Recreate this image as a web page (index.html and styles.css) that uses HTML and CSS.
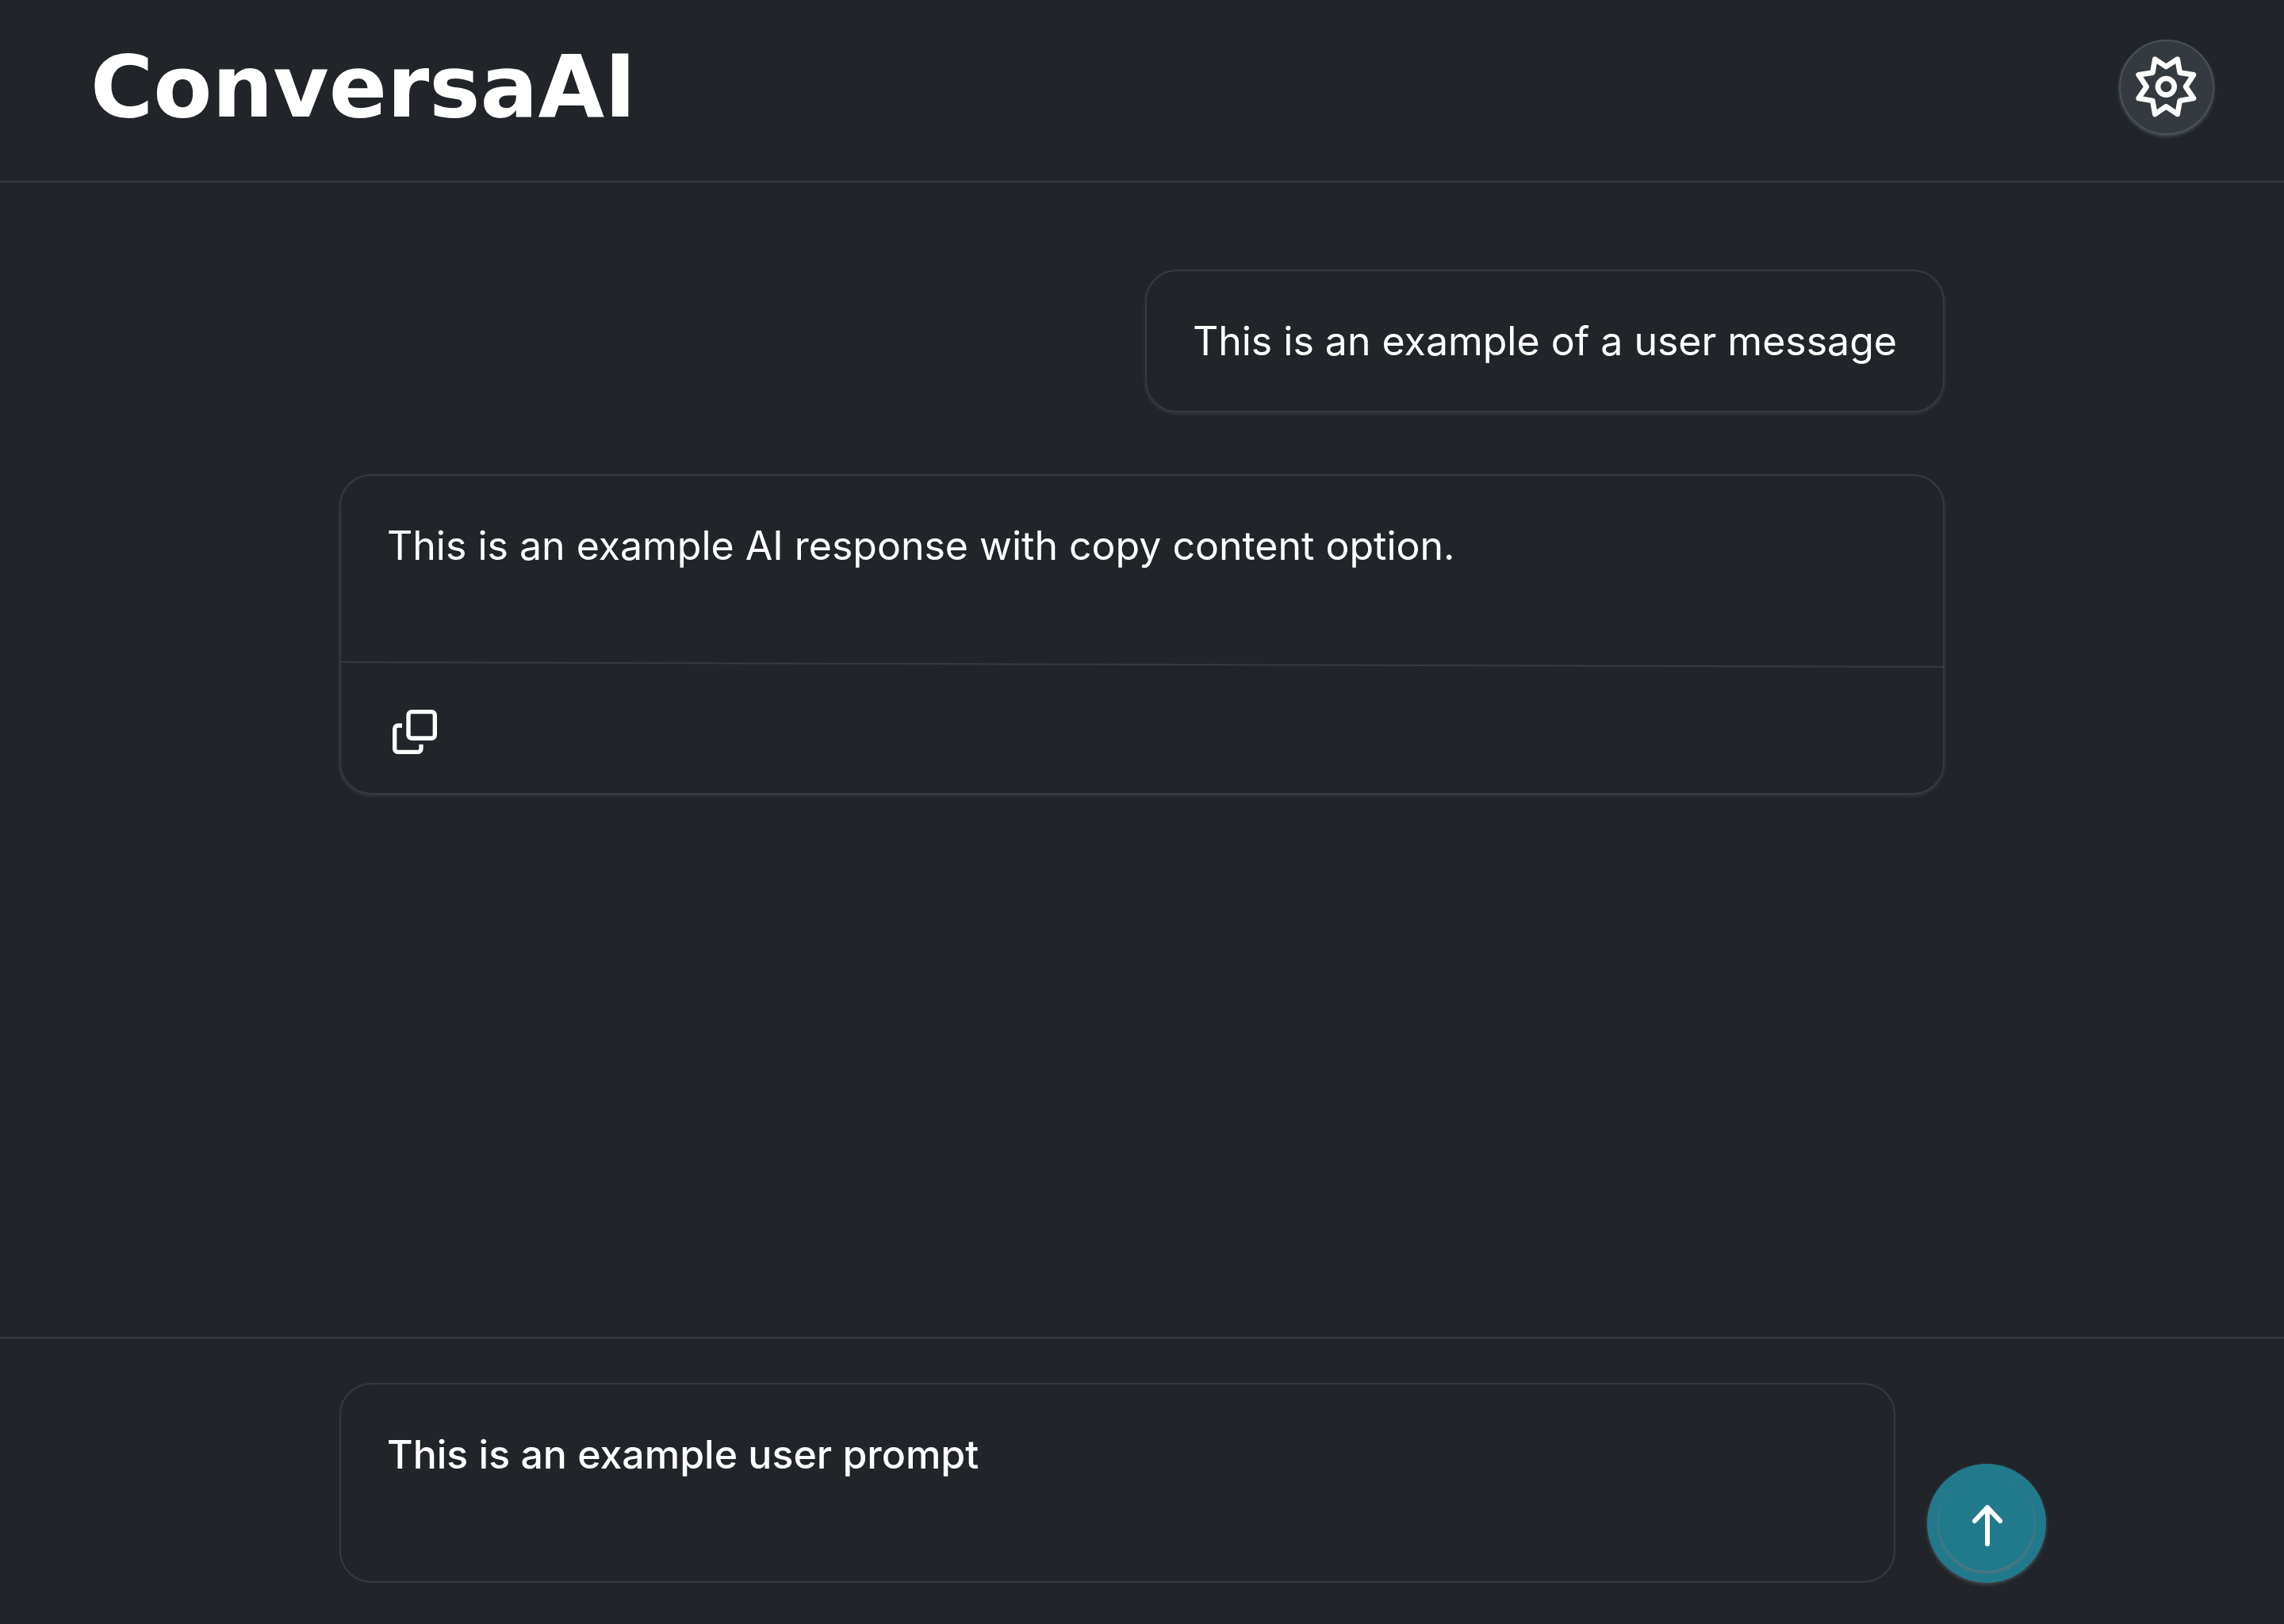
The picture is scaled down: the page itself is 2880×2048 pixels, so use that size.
FILE: index.html
```html
<!DOCTYPE html>
<html lang="en">
<head>
<meta charset="utf-8">
<meta name="viewport" content="width=device-width, initial-scale=1">
<title>ConversaAI</title>
<link rel="stylesheet" href="styles.css">
</head>
<body>
<div class="app">
  <header class="header">
    <h1 class="logo">ConversaAI</h1>
    <button class="settings" type="button" aria-label="Settings">
      <svg class="settings-icon" viewBox="155 119 240 240" aria-hidden="true">
        <path d="M231 133 L273 161 L316 133 L325 184 L377 192 L347 237 L377 281 L325 290 L316 341 L273 312 L231 341 L222 290 L169 281 L199 237 L169 192 L222 184 Z"/>
        <circle cx="273" cy="237" r="31"/>
      </svg>
    </button>
  </header>

  <main class="chat">
    <article class="message message-user">
      <p class="message-text">This is an example of a user message</p>
    </article>
    <article class="message message-ai">
      <p class="message-text">This is an example AI response with copy content option.</p>
      <svg class="divider" viewBox="0 0 2020 10" preserveAspectRatio="none" aria-hidden="true">
        <line x1="0" y1="3" x2="2020" y2="9"/>
      </svg>
      <div class="message-actions">
        <button class="copy" type="button" aria-label="Copy response">
          <svg class="copy-icon" viewBox="255 945 168 168" aria-hidden="true">
            <rect x="315" y="953" width="100" height="100" rx="12"/>
            <path d="M291 1005 H275 A12 12 0 0 0 263 1017 V1093 A12 12 0 0 0 275 1105 H351 A12 12 0 0 0 363 1093 V1076"/>
          </svg>
        </button>
      </div>
    </article>
  </main>

  <form class="composer">
    <textarea class="prompt" aria-label="Prompt" spellcheck="false">This is an example user prompt</textarea>
    <button class="send" type="button" aria-label="Send">
      <span class="send-inner">
        <svg class="send-icon" viewBox="0 0 60 60" aria-hidden="true">
          <path d="M31 56 V10 M15 27 L31 10 L47 27"/>
        </svg>
      </span>
    </button>
  </form>
</div>
</body>
</html>
```
FILE: styles.css
```css
* {
  box-sizing: border-box;
}

body {
  margin: 0;
  background: #212529;
  color: #fff;
  font-family: Inter, "Liberation Sans", sans-serif;
  font-size: 50px;
  line-height: 60px;
}

button {
  padding: 0;
  border: 0;
  background: none;
  color: inherit;
  cursor: pointer;
}

svg {
  display: block;
  fill: none;
  stroke: currentColor;
}

.app {
  display: flex;
  flex-direction: column;
  min-height: 100vh;
}

.header {
  display: flex;
  align-items: center;
  justify-content: space-between;
  padding: 50px 88px 58px 114px;
  border-bottom: 2px solid #343a40;
}

.logo {
  margin: 0;
  font-family: "DejaVu Sans", sans-serif;
  font-size: 108px;
  font-weight: 700;
  line-height: 120px;
}

.settings {
  display: grid;
  place-items: center;
  width: 120px;
  height: 120px;
  border: 2px solid #495057;
  border-radius: 50%;
  background: #343a40;
  box-shadow: 0 2px 4px #495057;
}

.settings-icon {
  width: 80px;
  height: 80px;
  stroke-width: 20;
  stroke-linejoin: round;
}

.chat {
  display: flex;
  flex: 1;
  flex-direction: column;
  gap: 78px;
  padding: 110px 428px;
}

.message {
  border: 2px solid #343a40;
  border-radius: 40px;
  background: #212529;
  box-shadow: 0 2px 4px #343a40;
}

.message-user {
  align-self: flex-end;
}

.message-text {
  margin: 0;
  padding: 58px;
}

.message-ai .message-text {
  padding-bottom: 114px;
}

.divider {
  width: 100%;
  height: 10px;
  stroke: #343a40;
  stroke-width: 2;
}

.message-actions {
  display: flex;
  padding: 53px 65px 49px;
}

.copy-icon {
  width: 56px;
  height: 56px;
  stroke-width: 16;
}

.composer {
  display: flex;
  align-items: flex-end;
  gap: 40px;
  padding: 56px 300px 52px 428px;
  border-top: 2px solid #343a40;
}

.prompt {
  display: block;
  flex: 1;
  height: 252px;
  padding: 58px;
  border: 2px solid #343a40;
  border-radius: 40px;
  outline: 0;
  background: #212529;
  color: inherit;
  font: inherit;
  font-weight: 500;
  resize: none;
}

.send {
  display: grid;
  place-items: center;
  width: 150px;
  height: 150px;
  border-radius: 50%;
  background: #217a8c;
  box-shadow: 0 2px 4px #495057;
}

.send-inner {
  display: grid;
  place-items: center;
  width: 120px;
  height: 120px;
  border-radius: 50%;
  background: #217a8c;
  box-shadow: 0 2px 4px #6c757d;
}

.send-icon {
  width: 60px;
  height: 60px;
  stroke-width: 6;
  stroke-linecap: round;
  stroke-linejoin: round;
}
```
